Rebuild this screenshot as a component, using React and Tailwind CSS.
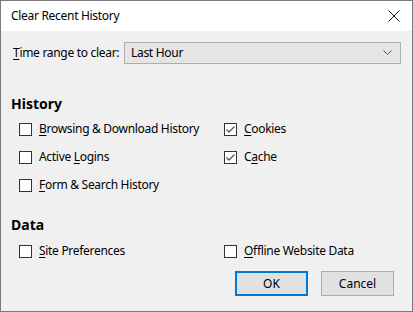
import React from "react";

function Box({ checked }) {
  return (
    <span className="w-[13px] h-[13px] border border-[#333333] bg-white flex items-center justify-center shrink-0">
      {checked && (
        <svg width="11" height="11" viewBox="0 0 11 11">
          <path d="M1.5 5.5 L4 8 L9.5 2.5" stroke="#555" strokeWidth="1.3" fill="none" />
        </svg>
      )}
    </span>
  );
}

function Item({ checked, children, className = "" }) {
  return (
    <div className={"flex items-center gap-[7px] h-[14px] " + className}>
      <Box checked={checked} />
      <span className="text-[12px] text-black leading-none whitespace-nowrap tracking-[-0.3px]">{children}</span>
    </div>
  );
}

const U = ({ children }) => <span className="underline underline-offset-2">{children}</span>;

export default function App() {
  return (
    <div
      className="w-[413px] h-[312px] bg-[#f0f0f0] border border-[#7a7a7a] flex flex-col"
      style={{ fontFamily: '"Noto Sans", "Open Sans", sans-serif' }}
    >
      <div className="h-[30px] bg-white flex items-center justify-between pl-[10px] pr-[12px] shrink-0">
        <span className="text-[12px] text-black tracking-[-0.3px]">Clear Recent History</span>
        <svg width="12" height="12" viewBox="0 0 12 12">
          <path d="M0.5 0.5 L11.5 11.5 M11.5 0.5 L0.5 11.5" stroke="#111" strokeWidth="1" />
        </svg>
      </div>
      <div className="flex-1 flex flex-col pl-[10px] pr-[11px]">
        <div className="flex items-center mt-[11px] h-[21px]">
          <span className="text-[12px] text-black w-[113px] pl-[2px] whitespace-nowrap tracking-[-0.3px]"><U>T</U>ime range to clear:</span>
          <div className="flex-1 h-[22px] bg-[#e5e5e5] border border-[#adadad] flex items-center justify-between pl-[6px] pr-[8px]">
            <span className="text-[12px] text-black tracking-[-0.3px]">Last Hour</span>
            <svg width="9" height="5" viewBox="0 0 9 5">
              <path d="M0.5 0.5 L4.5 4.5 L8.5 0.5" stroke="#555" strokeWidth="1" fill="none" />
            </svg>
          </div>
        </div>
        <div className="mt-[34px] text-[14px] font-bold text-black leading-none">History</div>
        <div className="flex mt-[11px] pl-[8px]">
          <div className="w-[205px] flex flex-col gap-[14px]">
            <Item><U>B</U>rowsing &amp; Download History</Item>
            <Item>Active <U>L</U>ogins</Item>
            <Item><U>F</U>orm &amp; Search History</Item>
          </div>
          <div className="flex flex-col gap-[14px]">
            <Item checked><U>C</U>ookies</Item>
            <Item checked>C<U>a</U>che</Item>
          </div>
        </div>
        <div className="mt-[26px] text-[14px] font-bold text-black leading-none">Data</div>
        <div className="flex mt-[12px] pl-[8px]">
          <div className="w-[205px]">
            <Item><U>S</U>ite Preferences</Item>
          </div>
          <Item><U>O</U>ffline Website Data</Item>
        </div>
        <div className="flex justify-end gap-[13px] mt-[13px] pr-[7px]">
          <button className="w-[73px] h-[25px] bg-[#e1e1e1] border-2 border-[#0078d7] text-[12px] text-black flex items-center justify-center">OK</button>
          <button className="w-[73px] h-[25px] bg-[#e1e1e1] border border-[#adadad] text-[12px] text-black flex items-center justify-center">Cancel</button>
        </div>
      </div>
    </div>
  );
}
